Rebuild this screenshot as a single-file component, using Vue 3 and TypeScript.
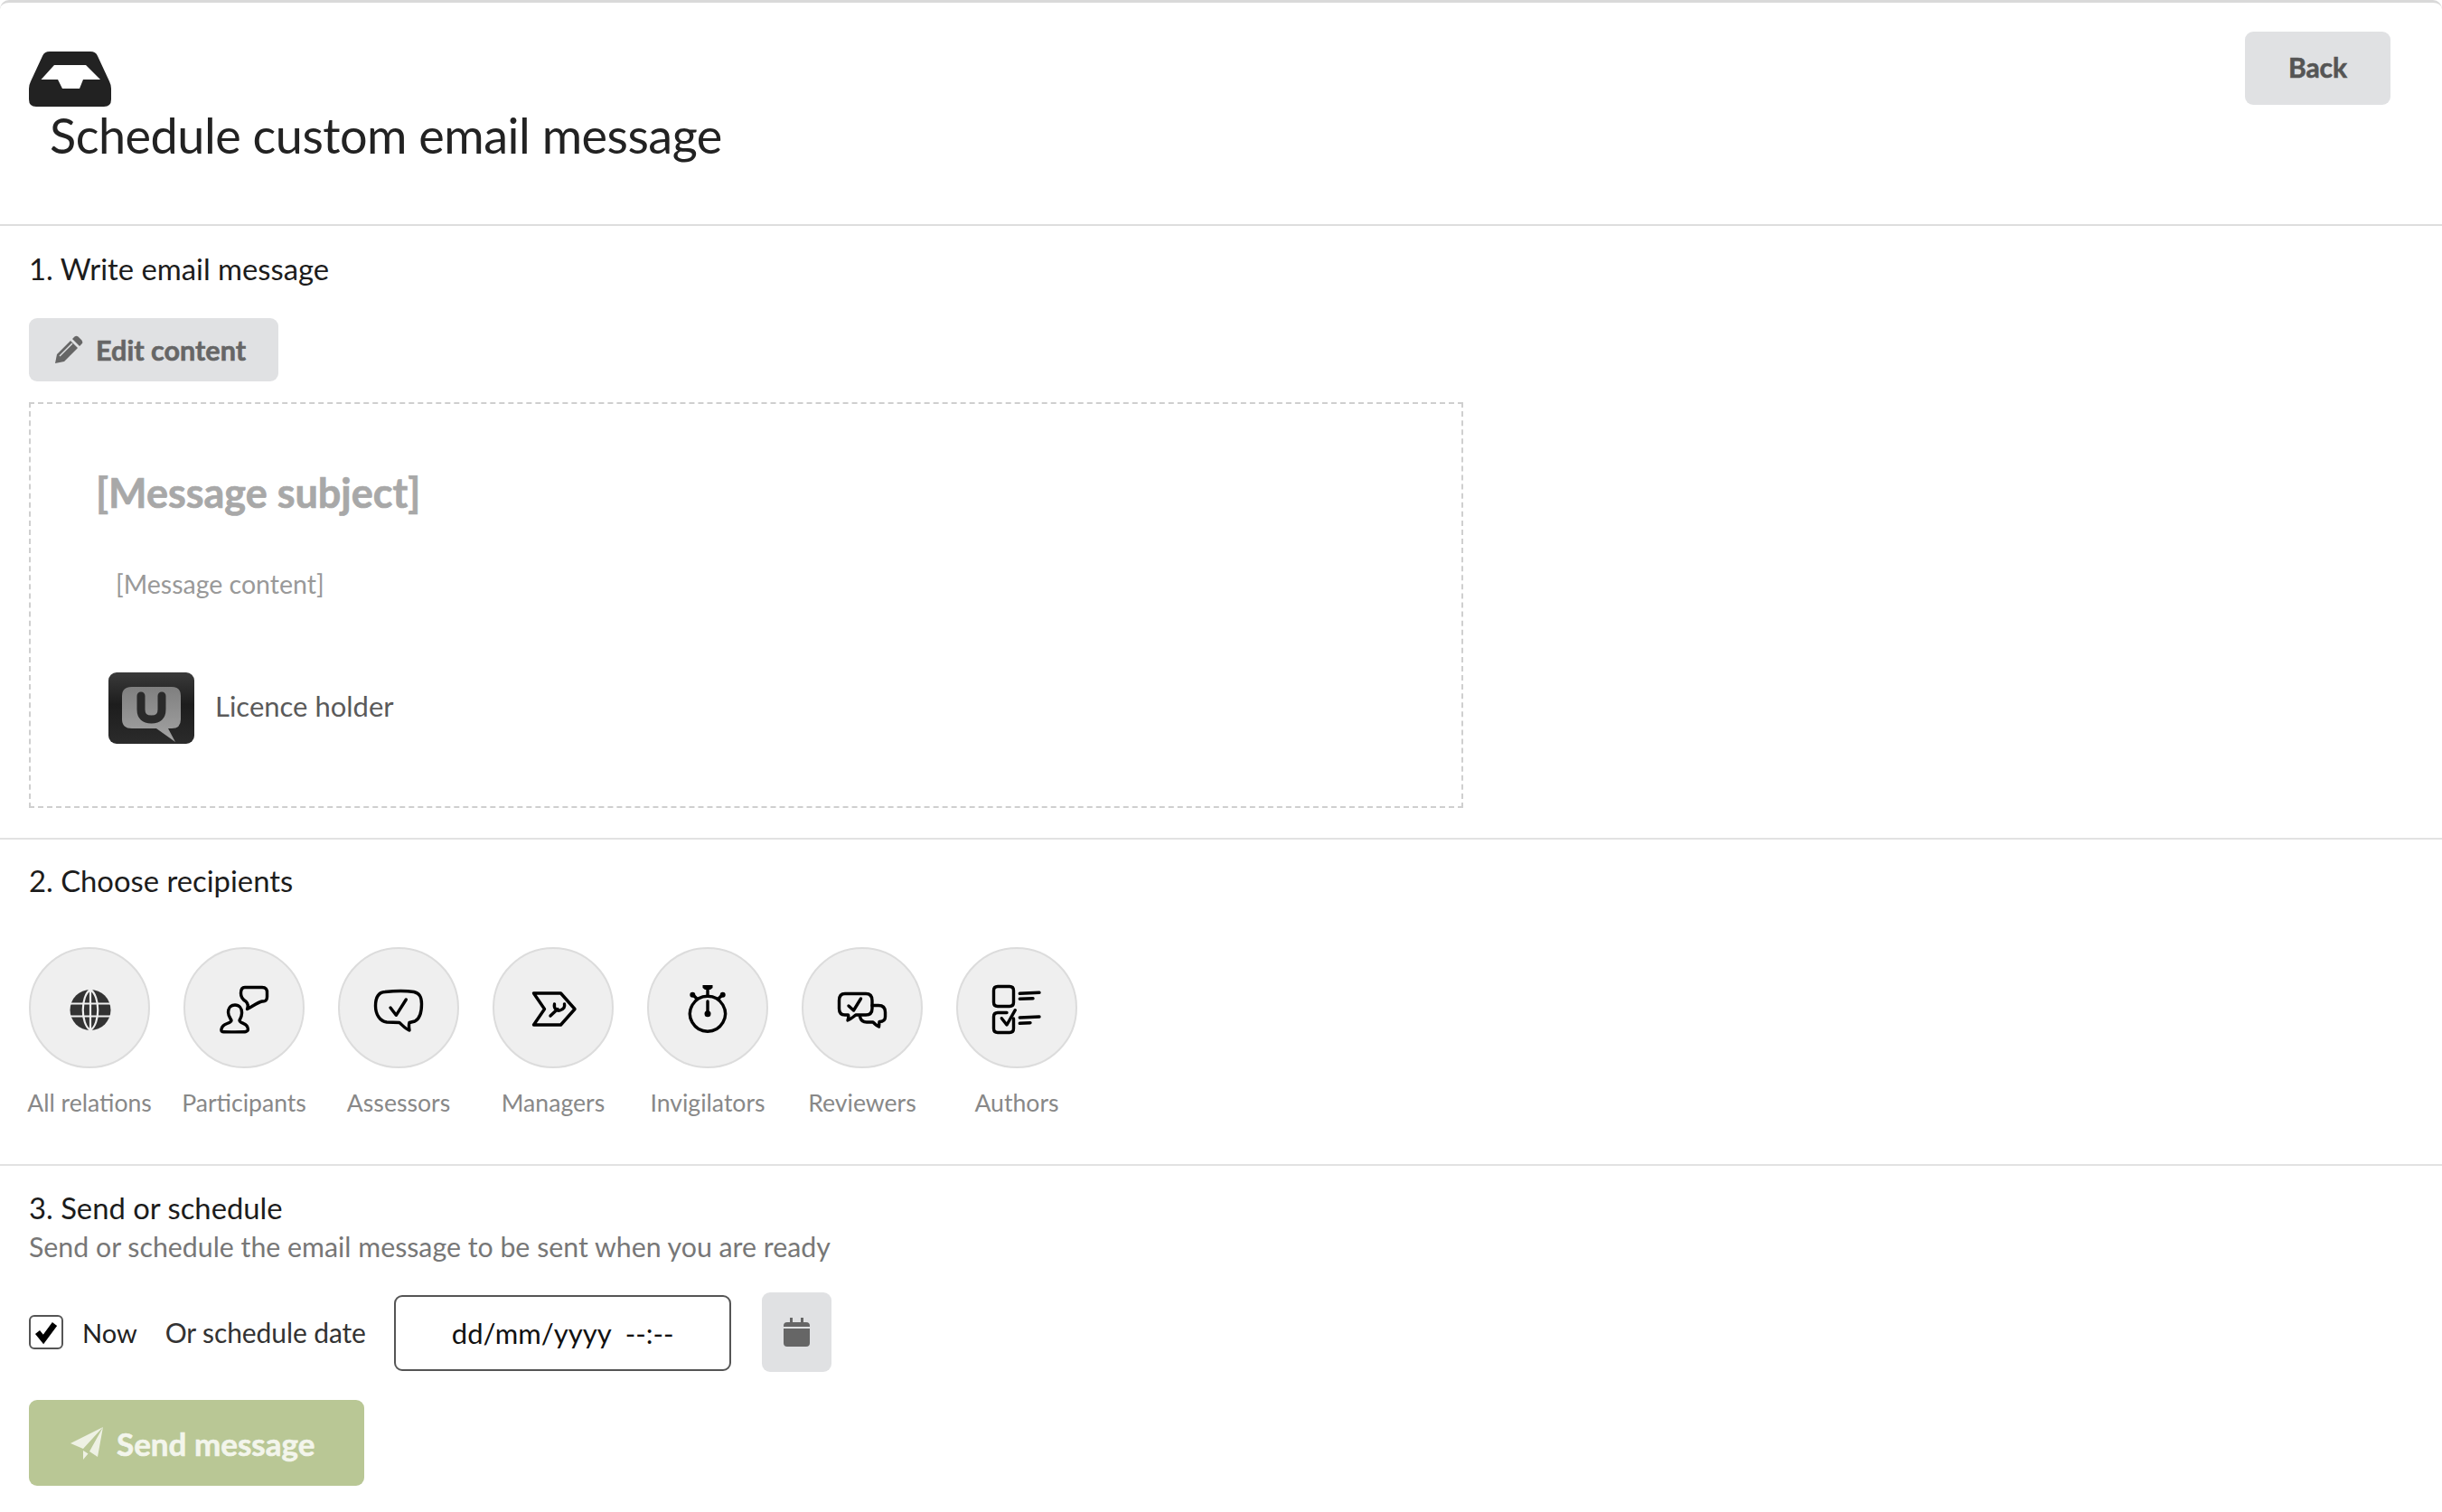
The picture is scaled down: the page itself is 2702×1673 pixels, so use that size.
<script setup lang="ts">
interface Recipient { label: string; shift: number; paths: string[]; solid?: string[] }

const recipients: Recipient[] = [
  { label: 'All relations', shift: 0, paths: [] },
  {
    label: 'Participants', shift: 0,
    paths: [
      'M35 42C29 42 27.5 47 27.5 50C27.5 54 30 57 31 59C31 62 25 62 22 65C20 67 19 71 21 71.5C25 72 45 72 47 71.5C50 71 50 68 48 65C46 62 40 62 40 59C41 57 43 54 42.5 50C42.5 46 40 42 35 42Z',
      'M46 22.5H65Q71 22.5 70.5 29V33Q70.5 38.5 65 38C60 39 54 44 48.5 46.5C50 43 49 40 47 38Q41.5 35 41.5 29Q41.5 22.5 46 22.5Z'
    ]
  },
  {
    label: 'Assessors', shift: 0,
    paths: [
      'M30 27.5C40 26.5 55 26.5 62 27.5C69 29 70.5 34 70.5 41C70.5 50 69 57 63 60L57 61.5C56 64 56.5 67 57 70C53 69 50 65 46 61.5L32 61C24 60 19.5 52 19.5 43C19.5 34 22 28 30 27.5Z',
      'M36 45L42.3 53.3L53.3 36'
    ]
  },
  {
    label: 'Managers', shift: 3.5,
    paths: [
      'M20 29H50L65.5 46.5L50 64H20L32 46.5Z',
      'M38.5 54L46.5 46.5',
      'M43 41C42 46 46 49 49 48C52 47 55 45 54 41'
    ]
  },
  {
    label: 'Invigilators', shift: 0,
    paths: [
      'M45 24V31', 'M30 32L33 35', 'M60 32L57 35', 'M45 38V50',
      'M45 32.2A19.5 19.5 0 1 1 44.9 32.2Z'
    ],
    solid: [
      'M39.5 20H50.5V23L48 25H42L39.5 23Z',
      'M25.3 30.7a3 3 0 1 0 6 0a3 3 0 1 0-6 0Z',
      'M58.7 30.7a3 3 0 1 0 6 0a3 3 0 1 0-6 0Z',
      'M41.5 51.7a3.5 3.5 0 1 0 7 0a3.5 3.5 0 1 0-7 0Z'
    ]
  },
  {
    label: 'Reviewers', shift: 0,
    paths: [
      'M26 29.5H49Q56 29.5 56 37V46Q56 53 49 53H38C35 55 32 58 29 59C30 56 30 54 29.5 53H26Q19.5 53 19.5 46V37Q19.5 29.5 26 29.5Z',
      'M30 43L35.5 48L43.5 35',
      'M56 42.5H63Q70.5 42.5 70.5 50V55Q70.5 60.5 64 60.5L63.5 66C61 65 59 63 57 61H50Q44 61 42.5 55'
    ]
  },
  {
    label: 'Authors', shift: 0,
    paths: [
      'M24 21.5H37Q41.5 21.5 41.5 26V39Q41.5 43.5 37 43.5H24Q19.5 43.5 19.5 39V26Q19.5 21.5 24 21.5Z',
      'M34 50.5H24Q19.5 50.5 19.5 55V68Q19.5 72.5 24 72.5H37Q41.5 72.5 41.5 68V57',
      'M28.3 56.7L34 64L43.3 47.7',
      'M48.3 29.3L70 28.3', 'M48.3 35.3L63 34.7', 'M48.3 56L70 55', 'M48.3 62.3L60 61.7'
    ]
  }
]
</script>

<template>
  <div class="page">
    <header class="head">
      <div class="head-left">
        <svg class="inbox" viewBox="0 0 91 61" width="91" height="61" aria-hidden="true">
          <path fill="#222" fill-rule="evenodd" d="M23 0H68Q74 0 76 5L89 33Q91 37 91 41V53Q91 61 83 61H8Q0 61 0 53V41Q0 37 2 33L15 5Q17 0 23 0ZM28 15L13.5 31H32L37 41H56L60 31H79L63 15Z" />
        </svg>
        <h1 class="title">Schedule custom email message</h1>
      </div>
      <button class="back">Back</button>
    </header>

    <section class="sec sec-one">
      <h2 class="sec-title">1. Write email message</h2>
      <button class="edit">
        <svg viewBox="0 0 32 32" width="32" height="32" aria-hidden="true">
          <path fill="#666" d="M1 31L3 21L18 6L26 14L11 29ZM20 4L22.5 1.5Q24.5 0 26.5 1.5L30.5 5.5Q32 7.5 30.5 9.5L28 12ZM4.5 22.5L9.5 27.5L5 29L3 27Z" />
          <path stroke="#e0e1e3" stroke-width="1.4" fill="none" d="M6 23L20 9" />
        </svg>
        Edit content
      </button>
      <div class="mail">
        <div class="subject">[Message subject]</div>
        <div class="content">[Message content]</div>
        <div class="holder">
          <svg class="logo" viewBox="0 0 95 79" width="95" height="79" aria-hidden="true">
            <defs>
              <linearGradient id="lg-dark" x1="0" y1="0" x2="0" y2="1">
                <stop offset="0" stop-color="#3a3a3a" />
                <stop offset=".45" stop-color="#1d1d1d" />
                <stop offset="1" stop-color="#2b2b2b" />
              </linearGradient>
              <linearGradient id="lg-bubble" x1="0" y1="0" x2="0" y2="1">
                <stop offset="0" stop-color="#7f7f7f" />
                <stop offset="1" stop-color="#a4a4a4" />
              </linearGradient>
            </defs>
            <rect width="95" height="79" rx="9" fill="url(#lg-dark)" />
            <path fill="url(#lg-bubble)" d="M26 16H70Q80 16 80 26V52Q80 62 70 62H66L74 77L53 62H26Q15 62 15 52V26Q15 16 26 16Z" />
            <path fill="none" stroke="#2a2a2a" stroke-width="9" stroke-linecap="round" d="M36 26V41Q36 52 47.500 52Q59 52 59 41V26" />
          </svg>
          <span class="holder-name">Licence holder</span>
        </div>
      </div>
    </section>

    <section class="sec sec-two">
      <h2 class="sec-title">2. Choose recipients</h2>
      <ul class="people">
        <li v-for="r in recipients" :key="r.label" class="person">
          <span class="disc">
            <svg viewBox="0 0 90 90" width="90" height="90" aria-hidden="true">
              <template v-if="r.paths.length === 0">
                <circle cx="46" cy="47.500" r="22.500" fill="#333" />
                <path fill="none" stroke="#efefef" stroke-width="2.200" d="M23 40.500H69M23 54.500H69M46 25V70M46 25C35 32 35 63 46 70C57 63 57 32 46 25Z" />
              </template>
              <g :transform="`translate(${r.shift} 0)`">
                <path v-for="d in r.paths" :key="d" :d="d" class="line" />
                <path v-for="d in r.solid ?? []" :key="d" :d="d" fill="#000" />
              </g>
            </svg>
          </span>
          <span class="who">{{ r.label }}</span>
        </li>
      </ul>
    </section>

    <section class="sec-three">
      <h2 class="sec-title tight">3. Send or schedule</h2>
      <p class="hint">Send or schedule the email message to be sent when you are ready</p>
      <div class="when">
        <span class="check">
          <svg viewBox="0 0 28 28" width="28" height="28" aria-hidden="true">
            <path fill="none" stroke="#000" stroke-width="6.500" d="M4.500 14L11 22L23.500 5" />
          </svg>
        </span>
        <span class="now">Now</span>
        <span class="or">Or schedule date</span>
        <div class="date">dd/mm/yyyy&nbsp; --:--</div>
        <button class="cal">
          <svg viewBox="0 0 29 32" width="29" height="32" aria-hidden="true">
            <path fill="#666" d="M7 0H10V5H19V0H22V5H25Q29 5 29 9V10H0V9Q0 5 4 5H7ZM0 12H29V28Q29 32 25 32H4Q0 32 0 28Z" />
          </svg>
        </button>
      </div>
      <button class="send">
        <svg viewBox="0 0 36 36" width="36" height="36" aria-hidden="true">
          <path fill="#eef1e4" d="M36 0L30 33L21 27L36 0L14 24L0 18ZM14 26L19.500 29.500L14 36Z" />
        </svg>
        Send message
      </button>
    </section>
  </div>
</template>

<style scoped>
.page {
  box-sizing: border-box;
  width: 2702px;
  height: 1673px;
  overflow: hidden;
  background: #fff;
  border-top: 3px solid #d9d9d9;
  border-radius: 10px 10px 0 0;
  font-family: Lato, "Noto Sans", sans-serif;
  color: #1c1c1c;
}
button { font-family: inherit; border: 0; cursor: pointer; }
.head {
  box-sizing: border-box;
  height: 247px;
  border-bottom: 2px solid #dedede;
  padding: 32px 57px 0 32px;
  display: flex;
  justify-content: space-between;
  align-items: flex-start;
}
.head-left { display: flex; flex-direction: column; padding-top: 22px; }
.inbox { display: block; }
.title {
  margin: 0 0 0 23px;
  font-size: 54px;
  line-height: 64px;
  font-weight: 400;
  letter-spacing: -0.5px;
  color: #222;
}
.back {
  width: 161px;
  height: 81px;
  padding: 0 0 3px;
  background: #e0e1e3;
  color: #555;
  border-radius: 9px;
  font-size: 30px;
  font-weight: 700;
  -webkit-text-stroke: 0.6px #555;
}
.sec { border-bottom: 2px solid #e2e2e2; box-sizing: border-box; padding: 0 32px; }
.sec-one { height: 679px; padding-top: 28px; }
.sec-two { height: 361px; padding-top: 26px; }
.sec-three { padding: 28px 32px 0; }
.sec-title {
  margin: 0;
  font-size: 32.8px;
  line-height: 40px;
  font-weight: 400;
  color: #1c1c1c;
}
.edit {
  display: flex;
  align-items: center;
  gap: 14px;
  margin-top: 34px;
  width: 276px;
  height: 70px;
  padding: 0 0 0 28px;
  background: #e0e1e3;
  color: #666;
  border-radius: 9px;
  font-size: 30.6px;
  font-weight: 700;
  -webkit-text-stroke: 0.6px #666;
}
.mail {
  box-sizing: border-box;
  width: 1587px;
  height: 449px;
  margin-top: 23px;
  border: 2px dashed #cfcfcf;
  padding: 70px 0 0 72px;
}
.subject {
  font-size: 45px;
  line-height: 56px;
  font-weight: 700;
  color: #a8a8a8;
  -webkit-text-stroke: 0.7px #a8a8a8;
}
.content { margin: 56px 0 0 22px; font-size: 28.5px; line-height: 34px; color: #999; }
.holder {
  display: flex;
  align-items: center;
  gap: 23px;
  margin: 81px 0 0 14px;
  font-size: 31px;
  color: #5a5a5a;
}
.holder-name { margin-bottom: 6px; }
.logo { display: block; }
.people {
  list-style: none;
  display: flex;
  gap: 37px;
  margin: 0;
  padding: 53px 0 0;
}
.person { width: 134px; display: flex; flex-direction: column; align-items: center; }
.disc {
  box-sizing: border-box;
  width: 134px;
  height: 134px;
  border-radius: 50%;
  background: #efefef;
  border: 2px solid #dcdcdc;
  display: flex;
  align-items: center;
  justify-content: center;
}
.disc svg { flex: none; }
.line {
  fill: none;
  stroke: #000;
  stroke-width: 3.4;
  stroke-linejoin: round;
  stroke-linecap: round;
}
.who {
  margin-top: 20px;
  font-size: 26.6px;
  line-height: 36px;
  color: #888;
  white-space: nowrap;
}
.tight { line-height: 38px; }
.hint { margin: 4px 0 0; font-size: 30.3px; line-height: 38px; color: #777; }
.when { display: flex; align-items: center; margin-top: 32px; height: 88px; }
.check {
  box-sizing: border-box;
  width: 38px;
  height: 38px;
  border: 2px solid #555;
  border-radius: 6px;
  display: flex;
  align-items: center;
  justify-content: center;
}
.now { margin-left: 21px; font-size: 29px; color: #222; }
.or { margin-left: 31px; font-size: 30px; letter-spacing: -0.1px; color: #333; }
.date {
  box-sizing: border-box;
  width: 373px;
  height: 84px;
  margin: 2px 0 0 31px;
  padding-left: 62px;
  border: 2.5px solid #555;
  border-radius: 9px;
  display: flex;
  align-items: center;
  font-size: 31px;
  color: #111;
  white-space: nowrap;
}
.cal {
  width: 77px;
  height: 88px;
  margin-left: 34px;
  background: #e0e1e3;
  border-radius: 9px;
  padding: 0;
  display: flex;
  align-items: center;
  justify-content: center;
}
.send {
  display: flex;
  align-items: center;
  gap: 15px;
  width: 371px;
  height: 95px;
  margin-top: 31px;
  padding: 0 0 0 46px;
  background: #b9c795;
  color: #f3f5ec;
  border-radius: 9px;
  font-size: 35px;
  font-weight: 700;
  -webkit-text-stroke: 0.6px #f3f5ec;
}
</style>
<style>
html, body { margin: 0; background: #fff; }
</style>
